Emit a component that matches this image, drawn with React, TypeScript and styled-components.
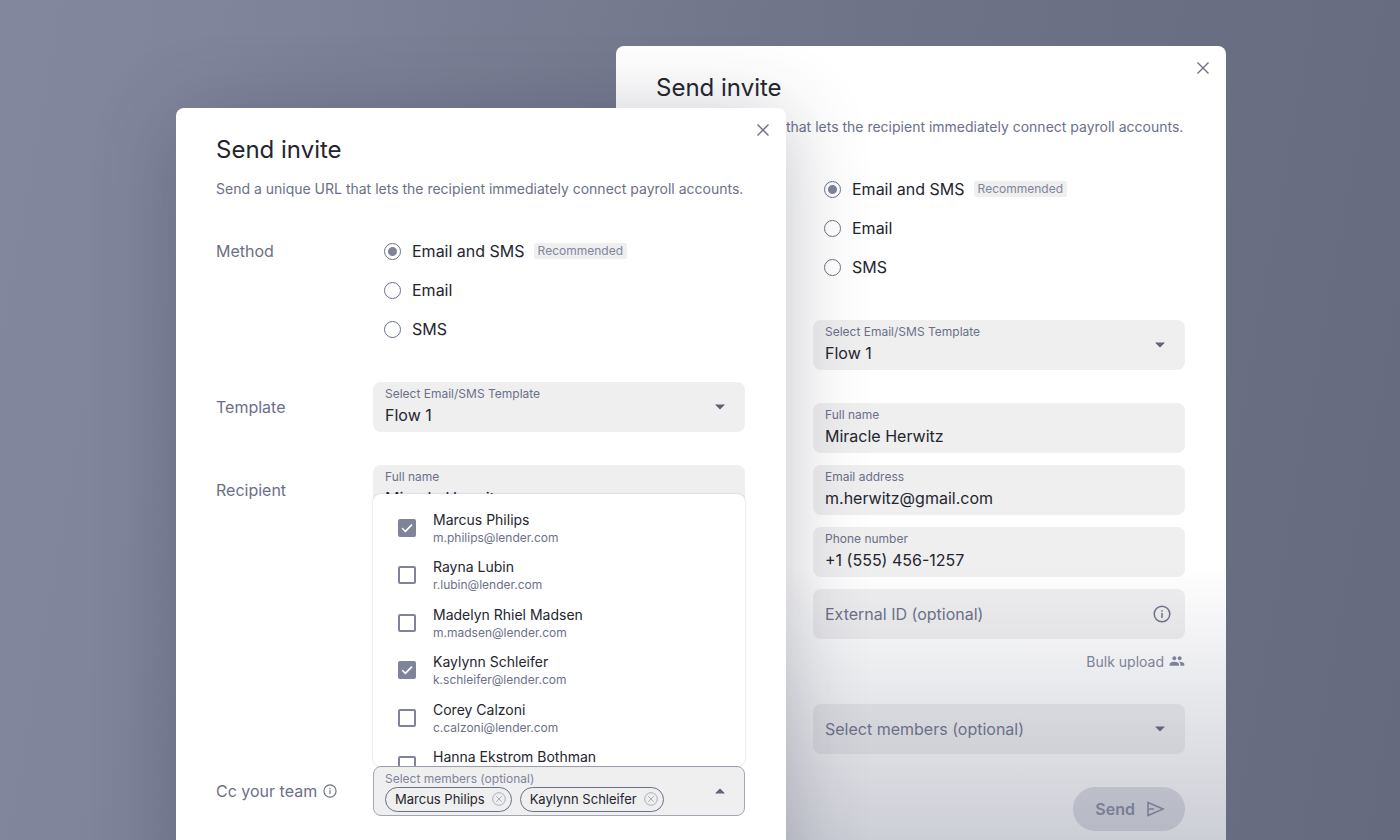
import React, { useId, useState } from 'react';
import styled, { createGlobalStyle, css } from 'styled-components';
import { MdPeople } from 'react-icons/md';

const ink = '#24252f';
const slate = '#6b7088';
const muted = '#7f849b';

const GlobalStyle = createGlobalStyle`
  *, *::before, *::after { box-sizing: border-box; }
  body { margin: 0; font-family: Inter, "Liberation Sans", sans-serif; color: ${ink}; }
  button, input, select { font: inherit; color: inherit; }
`;

const Stage = styled.main`
  display: grid;
  height: 100vh;
  overflow: hidden;
  padding: 0 174px 0 176px;
  background: linear-gradient(100deg, #82879d 0%, #80859b 14%, #6e7388 56%, #656a7e 100%);
`;

const Dialog = styled.form<{ $front?: boolean }>`
  grid-area: 1 / 1;
  position: relative;
  align-self: start;
  width: calc(50% + 85px);
  padding: 25px 41px 40px 40px;
  background: #fff;
  border-radius: 8px;
  ${p => p.$front ? css`
    justify-self: start;
    margin-top: 108px;
    box-shadow: 0 10px 80px rgba(40, 46, 64, 0.29);
  ` : css`
    justify-self: end;
    margin-top: 46px;
    overflow: hidden;
  `}
`;

const Haze = styled.div`
  position: absolute;
  inset: 520px 0 0;
  background: linear-gradient(rgba(107, 112, 135, 0), rgba(107, 112, 135, 0.4) 320px);
  pointer-events: none;
`;

const CloseButton = styled.button`
  position: absolute;
  top: 12px;
  right: 13px;
  display: grid;
  place-items: center;
  width: 20px;
  height: 20px;
  padding: 0;
  border: 0;
  background: none;
  color: ${slate};
`;

const Title = styled.h1`
  margin: 0;
  font-size: 24px;
  line-height: 34px;
  font-weight: 400;
`;

const Lead = styled.p`
  margin: 11px 0 40px;
  font-size: 14px;
  line-height: 22px;
  color: ${slate};
  white-space: nowrap;
`;

const Sections = styled.div`
  display: flex;
  flex-direction: column;
  gap: 33px;
`;

const Section = styled.div`
  display: grid;
  grid-template-columns: 157px minmax(0, 1fr);
`;

const SectionLabel = styled.div<{ $short?: boolean }>`
  display: flex;
  align-items: center;
  gap: 6px;
  height: ${p => (p.$short ? 22 : 50)}px;
  font-size: 16px;
  color: ${slate};
`;

const Options = styled.div`
  display: flex;
  flex-direction: column;
  gap: 17px;
  padding: 0 0 9px 11px;
`;

const Option = styled.label`
  display: flex;
  align-items: center;
  height: 22px;
  font-size: 16px;
`;

const Radio = styled.input`
  appearance: none;
  width: 17px;
  height: 17px;
  margin: 0 11px 0 0;
  border: 1px solid ${slate};
  border-radius: 50%;
  &:checked { background: radial-gradient(circle, ${muted} 4px, transparent 5px); }
`;

const Tag = styled.span`
  margin-left: 9px;
  padding: 0 4px;
  border-radius: 2px;
  background: #efeff0;
  font-size: 12px;
  line-height: 16px;
  color: ${muted};
`;

const Stack = styled.div`
  display: flex;
  flex-direction: column;
  gap: 12px;
`;

const Field = styled.div<{ $open?: boolean }>`
  position: relative;
  display: grid;
  grid-template-columns: minmax(0, 1fr) auto;
  align-items: center;
  height: 50px;
  padding: 3px 11px;
  border: 1px solid ${p => (p.$open ? '#a3a6b4' : 'transparent')};
  border-radius: 8px;
  background: #efeff0;
`;

const FieldLabel = styled.label`
  font-size: 12px;
  line-height: 16px;
  color: ${slate};
`;

const FieldCaption = styled.span`
  font-size: 12px;
  line-height: 16px;
  color: ${muted};
`;

const control = css`
  width: 100%;
  padding: 0;
  border: 0;
  background: none;
  appearance: none;
  outline: none;
  font-size: 16px;
`;

const Input = styled.input`
  ${control}
  height: 26px;
  &::placeholder { color: ${slate}; opacity: 1; }
`;

const Select = styled.select<{ $empty?: boolean }>`
  ${control}
  height: 26px;
  color: ${p => (p.$empty ? slate : ink)};
`;

const Adornment = styled.span<{ $inset?: number }>`
  grid-column: 2;
  grid-row: 1 / -1;
  display: grid;
  place-items: center;
  align-self: center;
  margin-right: ${p => p.$inset ?? 8}px;
  color: ${slate};
`;

const Lines = styled.div`
  display: flex;
  flex-direction: column;
`;

const Bulk = styled.a`
  display: flex;
  align-items: center;
  align-self: flex-end;
  gap: 5px;
  height: 20px;
  font-size: 14px;
  color: ${muted};
  text-decoration: none;
`;

const Chips = styled.div`
  display: flex;
  gap: 8px;
`;

const Chip = styled.span`
  display: flex;
  align-items: center;
  gap: 7px;
  height: 25px;
  padding: 0 5px 0 9px;
  border: 1px solid ${slate};
  border-radius: 13px;
  font-size: 13px;
  white-space: nowrap;
`;

const ChipRemove = styled.button`
  display: grid;
  padding: 0;
  border: 0;
  background: none;
  color: #a9acba;
`;

const Menu = styled.div`
  position: absolute;
  left: -1px;
  right: -1px;
  bottom: calc(100% + 1px);
  height: 272px;
  padding-top: 10px;
  overflow: hidden auto;
  scrollbar-width: none;
  border-radius: 8px;
  background: #fff;
  box-shadow: 0 0 2px rgba(80, 84, 110, 0.35);
`;

const People = styled.ul`
  display: grid;
  grid-auto-rows: 1fr;
  height: 285px;
  margin: 0;
  padding: 0;
  list-style: none;
`;

const Person = styled.label`
  display: flex;
  align-items: center;
  gap: 17px;
  height: 100%;
  padding: 0 25px;
`;

const PersonText = styled(Lines)`
  padding-top: 2px;
`;

const Check = styled.span`
  display: grid;
  flex: none;
  width: 18px;
  height: 18px;
  > * { grid-area: 1 / 1; }
  svg { pointer-events: none; }
`;

const Box = styled.input`
  appearance: none;
  width: 18px;
  height: 18px;
  margin: 0;
  border: 2px solid ${muted};
  border-radius: 2px;
  &:checked { background: ${muted}; }
`;

const PersonName = styled.span`
  font-size: 14px;
  line-height: 18px;
`;

const PersonMail = styled.span`
  font-size: 12px;
  line-height: 18px;
  color: ${slate};
`;

const Footer = styled.div`
  display: flex;
  justify-content: flex-end;
`;

const SendButton = styled.button`
  display: flex;
  align-items: center;
  gap: 12px;
  height: 44px;
  padding: 0 20px 0 22px;
  border: 0;
  border-radius: 22px;
  background: #dcdde3;
  color: ${muted};
  font-size: 16px;
  font-weight: 600;
`;

const CloseIcon = () => (
  <svg width="12" height="12" viewBox="0 0 12 12" fill="none" stroke="currentColor" strokeWidth="1.4">
    <path d="M.5.5l11 11M11.5.5l-11 11" />
  </svg>
);

const Caret = ({ up }: { up?: boolean }) => (
  <svg width="10" height="6" viewBox="0 0 10 6" fill="#5d6275">
    <path d={up ? 'M0 5.5L5 .5l5 5z' : 'M0 .5h10l-5 5z'} />
  </svg>
);

const InfoIcon = ({ size }: { size: number }) => (
  <svg width={size} height={size} viewBox="0 0 18 18" fill="none" stroke="currentColor" strokeWidth="1.5">
    <circle cx="9" cy="9" r="7.8" />
    <path d="M9 8v5M9 5.2v1.6" />
  </svg>
);

const RemoveIcon = () => (
  <svg width="14" height="14" viewBox="0 0 14 14" fill="none" stroke="currentColor">
    <circle cx="7" cy="7" r="6.3" />
    <path d="M4.2 4.2l5.6 5.6M9.8 4.2L4.2 9.8" />
  </svg>
);

const CheckIcon = () => (
  <svg width="18" height="18" viewBox="0 0 18 18" fill="none" stroke="#fff" strokeWidth="1.6">
    <path d="M4.2 9.2l3.2 3.2 6.6-6.8" />
  </svg>
);

const SendIcon = () => (
  <svg width="18" height="16" viewBox="0 0 18 16" fill="none" stroke="currentColor" strokeWidth="1.6">
    <path d="M1 1.4L16.2 8 1 14.6zM1 8h6" />
  </svg>
);

const people = [
  ['Marcus Philips', 'm.philips@lender.com'],
  ['Rayna Lubin', 'r.lubin@lender.com'],
  ['Madelyn Rhiel Madsen', 'm.madsen@lender.com'],
  ['Kaylynn Schleifer', 'k.schleifer@lender.com'],
  ['Corey Calzoni', 'c.calzoni@lender.com'],
  ['Hanna Ekstrom Bothman', 'h.bothman@lender.com'],
];

function TextField({ label, value }: { label: string; value: string }) {
  const id = useId();
  return (
    <Field>
      <Lines>
        <FieldLabel htmlFor={id}>{label}</FieldLabel>
        <Input id={id} defaultValue={value} />
      </Lines>
    </Field>
  );
}

function MembersField() {
  const [picked, setPicked] = useState(['Marcus Philips', 'Kaylynn Schleifer']);
  const toggle = (name: string) =>
    setPicked(list => (list.includes(name) ? list.filter(n => n !== name) : [...list, name]));
  return (
    <Field $open>
      <Lines>
        <FieldCaption>Select members (optional)</FieldCaption>
        <Chips>
          {picked.map(name => (
            <Chip key={name}>
              {name}
              <ChipRemove type="button" aria-label={`Remove ${name}`} onClick={() => toggle(name)}>
                <RemoveIcon />
              </ChipRemove>
            </Chip>
          ))}
        </Chips>
      </Lines>
      <Adornment><Caret up /></Adornment>
      <Menu>
        <People>
          {people.map(([name, mail]) => (
            <li key={mail}>
              <Person>
                <Check>
                  <Box type="checkbox" checked={picked.includes(name)} onChange={() => toggle(name)} />
                  {picked.includes(name) && <CheckIcon />}
                </Check>
                <PersonText>
                  <PersonName>{name}</PersonName>
                  <PersonMail>{mail}</PersonMail>
                </PersonText>
              </Person>
            </li>
          ))}
        </People>
      </Menu>
    </Field>
  );
}

function InviteDialog({ front }: { front?: boolean }) {
  const id = useId();
  return (
    <Dialog $front={front} aria-labelledby={`${id}-title`} onSubmit={e => e.preventDefault()}>
      <CloseButton type="button" aria-label="Close"><CloseIcon /></CloseButton>
      <Title id={`${id}-title`}>Send invite</Title>
      <Lead>Send a unique URL that lets the recipient immediately connect payroll accounts.</Lead>
      <Sections>
        <Section>
          <SectionLabel $short>Method</SectionLabel>
          <Options role="radiogroup" aria-label="Method">
            <Option><Radio type="radio" name={`${id}-method`} defaultChecked />Email and SMS<Tag>Recommended</Tag></Option>
            <Option><Radio type="radio" name={`${id}-method`} />Email</Option>
            <Option><Radio type="radio" name={`${id}-method`} />SMS</Option>
          </Options>
        </Section>
        <Section>
          <SectionLabel>Template</SectionLabel>
          <Field>
            <Lines>
              <FieldLabel htmlFor={`${id}-template`}>Select Email/SMS Template</FieldLabel>
              <Select id={`${id}-template`}><option>Flow 1</option></Select>
            </Lines>
            <Adornment><Caret /></Adornment>
          </Field>
        </Section>
        <Section>
          <SectionLabel>Recipient</SectionLabel>
          <Stack>
            <TextField label="Full name" value="Miracle Herwitz" />
            <TextField label="Email address" value="m.herwitz@gmail.com" />
            <TextField label="Phone number" value="+1 (555) 456-1257" />
            <Field>
              <Input aria-label="External ID (optional)" placeholder="External ID (optional)" />
              <Adornment $inset={2}><InfoIcon size={18} /></Adornment>
            </Field>
            <Bulk href="#bulk">Bulk upload<MdPeople size={16} /></Bulk>
          </Stack>
        </Section>
        <Section>
          <SectionLabel>Cc your team<InfoIcon size={14} /></SectionLabel>
          {front ? <MembersField /> : (
            <Field>
              <Select $empty aria-label="Select members"><option>Select members (optional)</option></Select>
              <Adornment><Caret /></Adornment>
            </Field>
          )}
        </Section>
        <Footer><SendButton>Send<SendIcon /></SendButton></Footer>
      </Sections>
      {!front && <Haze />}
    </Dialog>
  );
}

export default function App() {
  return (
    <>
      <GlobalStyle />
      <Stage>
        <InviteDialog />
        <InviteDialog front />
      </Stage>
    </>
  );
}
